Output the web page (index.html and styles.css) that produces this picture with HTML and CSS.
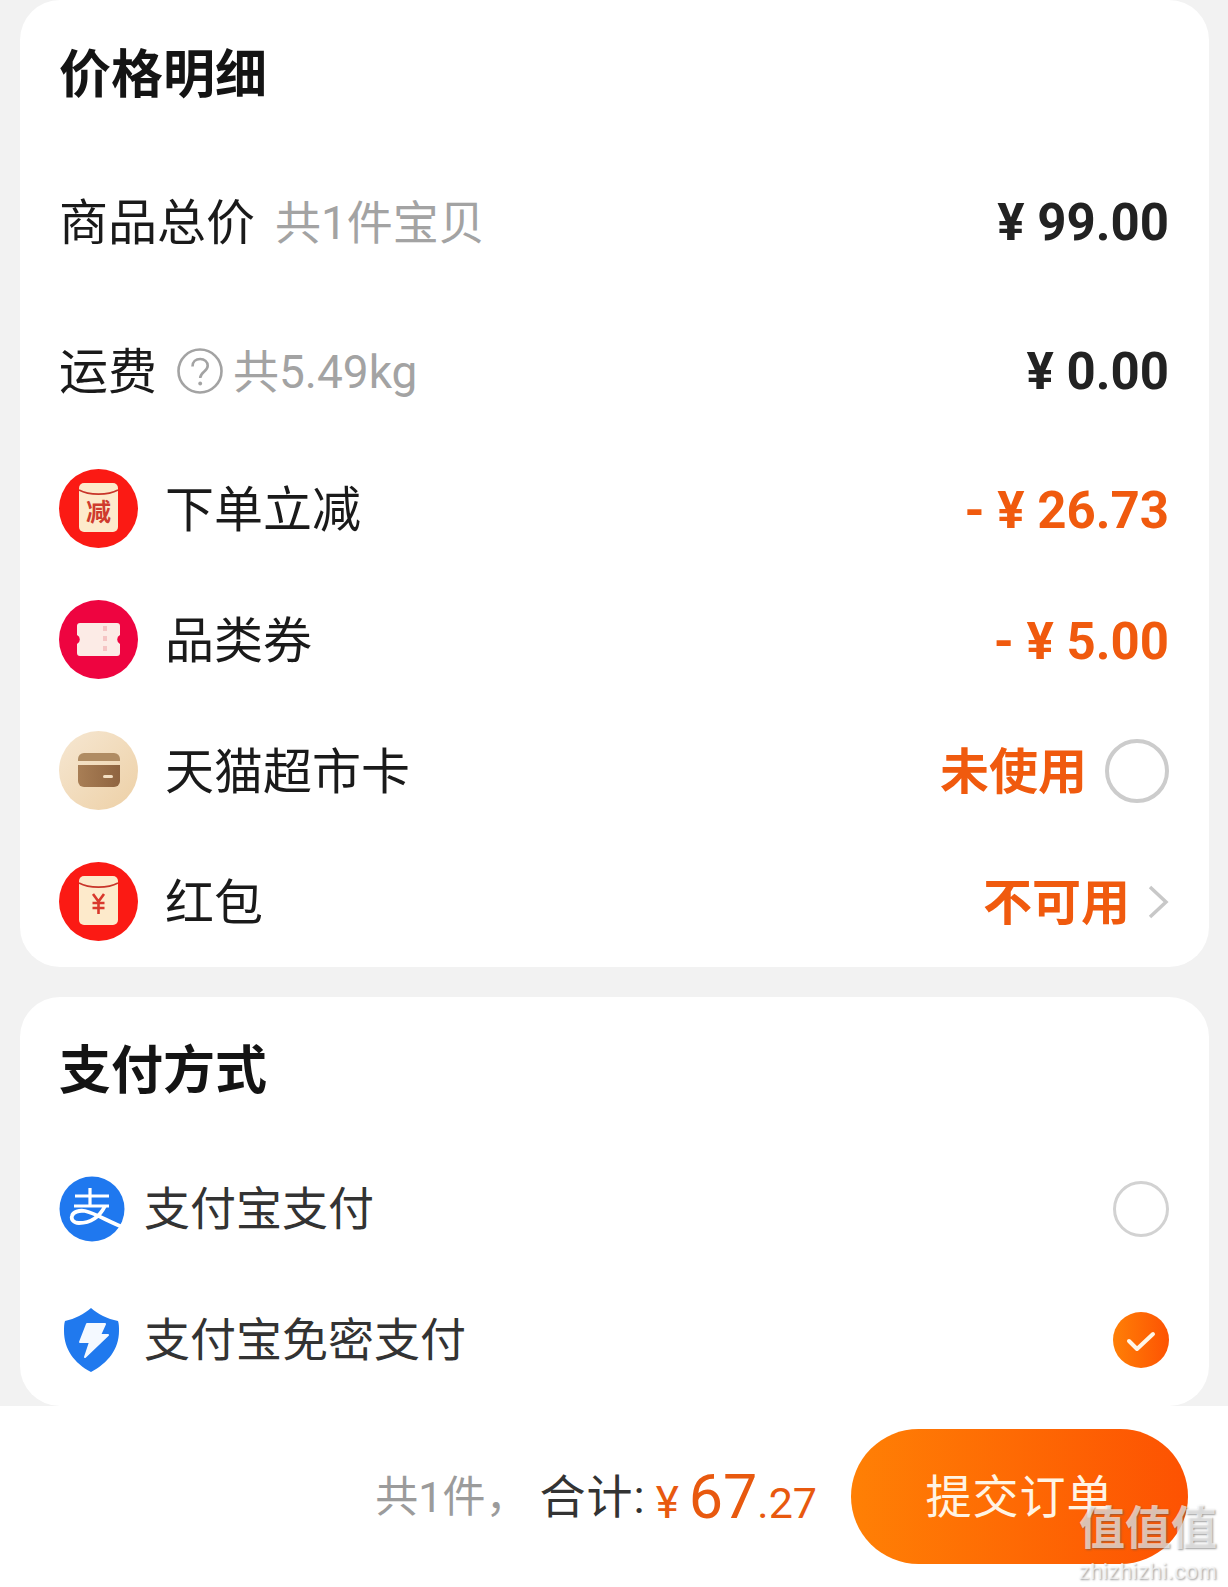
FILE: index.html
```html
<!DOCTYPE html>
<html lang="zh-CN">
<head>
    <meta charset="UTF-8">
    <meta name="viewport" content="width=device-width, initial-scale=1.0">
    <title>确认订单</title>
    <link rel="stylesheet" href="styles.css">
</head>
<body>
    <div class="card">
        <h2>价格明细</h2>
        <div class="row row-plain">
            <div class="label">商品总价<span class="note note-gap">共1件宝贝</span></div>
            <div class="price">¥ 99.00</div>
        </div>
        <div class="row row-plain row-ship">
            <div class="label">运费
                <svg class="help" viewBox="0 0 46 46">
                    <circle cx="23" cy="23" r="21.500" fill="none" stroke="#a3a3a3" stroke-width="2.600"/>
                    <path d="M15.500 18.500c0-4.600 3.300-7.500 7.700-7.500 4.300 0 7.500 2.800 7.500 6.700 0 5.800-7.500 6.300-7.500 12.300" fill="none" stroke="#a3a3a3" stroke-width="2.600"/>
                    <circle cx="23.200" cy="35.500" r="1.900" fill="#a3a3a3"/>
                </svg>
                <span class="note">共5.49kg</span>
            </div>
            <div class="price">¥ 0.00</div>
        </div>
        <div class="row">
            <div class="label">
                <svg class="icon" viewBox="0 0 79 79">
                    <circle cx="39.500" cy="39.500" r="39.500" fill="#fb1a14"/>
                    <rect x="20" y="14" width="39" height="49" rx="5" fill="#fdeacb"/>
                    <path d="M20 21c10 5.500 29 5.500 39 0" fill="none" stroke="#c8352a" stroke-width="1.600"/>
                    <text x="39.500" y="52" class="icon-text" font-size="25">减</text>
                </svg>
                下单立减
            </div>
            <div class="price orange">- ¥ 26.73</div>
        </div>
        <div class="row">
            <div class="label">
                <svg class="icon" viewBox="0 0 79 79">
                    <circle cx="39.500" cy="39.500" r="39.500" fill="#ee0440"/>
                    <path d="M21 23h37a3 3 0 0 1 3 3v9a5 5 0 0 0 0 9v9a3 3 0 0 1-3 3H21a3 3 0 0 1-3-3v-9a5 5 0 0 0 0-9v-9a3 3 0 0 1 3-3z" fill="#fcebe6"/>
                    <path d="M46 26v28" stroke="#f5c4c4" stroke-width="4" stroke-dasharray="5 5"/>
                </svg>
                品类券
            </div>
            <div class="price orange">- ¥ 5.00</div>
        </div>
        <div class="row">
            <div class="label">
                <svg class="icon" viewBox="0 0 79 79">
                    <defs>
                        <linearGradient id="tan" x1="0" y1="0" x2="1" y2="1">
                            <stop offset="0" stop-color="#f6e7d2"/>
                            <stop offset="1" stop-color="#edd0a6"/>
                        </linearGradient>
                        <linearGradient id="wallet" x1="0" y1="0" x2="1" y2="0">
                            <stop offset="0" stop-color="#a87e55"/>
                            <stop offset="1" stop-color="#8f6440"/>
                        </linearGradient>
                    </defs>
                    <circle cx="39.500" cy="39.500" r="39.500" fill="url(#tan)"/>
                    <path d="M19 30v-2a6 6 0 0 1 6-6h30a6 6 0 0 1 6 6v2z" fill="#b08c63"/>
                    <path d="M19 34h42v16a6 6 0 0 1-6 6H25a6 6 0 0 1-6-6z" fill="url(#wallet)"/>
                    <rect x="44" y="44" width="10" height="3" rx="1.500" fill="#f3dfc3"/>
                </svg>
                天猫超市卡
            </div>
            <div class="side">
                <span class="status">未使用</span>
                <span class="radio radio-lg"></span>
            </div>
        </div>
        <div class="row">
            <div class="label">
                <svg class="icon" viewBox="0 0 79 79">
                    <circle cx="39.500" cy="39.500" r="39.500" fill="#fb1a14"/>
                    <rect x="20" y="14" width="39" height="49" rx="5" fill="#fdeacb"/>
                    <path d="M20 21c10 5.500 29 5.500 39 0" fill="none" stroke="#c8352a" stroke-width="1.600"/>
                    <path d="M34 32l5.500 7.500L45 32M33.500 41h12M33.500 46h12M39.500 39v13" fill="none" stroke="#d9382c" stroke-width="2.600"/>
                </svg>
                红包
            </div>
            <div class="side side-arrow">
                <span class="status">不可用</span>
                <svg class="arrow" viewBox="0 0 22 36">
                    <path d="M3 3l16 15L3 33" fill="none" stroke="#c8c8c8" stroke-width="3.500"/>
                </svg>
            </div>
        </div>
    </div>

    <div class="card card-pay">
        <h2>支付方式</h2>
        <div class="row">
            <div class="label label-pay">
                <svg class="pay-icon" viewBox="0 0 66 66">
                    <circle cx="33" cy="33" r="32.500" fill="#1f78ef"/>
                    <path d="M16 20h34M31 12v18M15 30h35" fill="none" stroke="#fff" stroke-width="3.200"/>
                    <path d="M46 30C40 42 30 47 20 47 14 47 12 43 13 40 14 36 20 34 26 35 36 37 50 46 66 52" fill="none" stroke="#fff" stroke-width="3.800"/>
                </svg>
                支付宝支付
            </div>
            <span class="radio"></span>
        </div>
        <div class="row">
            <div class="label label-pay">
                <svg class="pay-icon" viewBox="0 0 66 66">
                    <path d="M32 1c7 6 16 11 27 13 1 3 1 6 1 10 0 18-11 32-28 41C15 56 5 42 5 24c0-4 0-7 1-10C16 12 25 7 32 1z" fill="#2079ee"/>
                    <path d="M28 17h18l-5 11h8L26 50l5-15H21z" fill="#f4f9ff" stroke="#f4f9ff" stroke-width="2" stroke-linejoin="round"/>
                </svg>
                支付宝免密支付
            </div>
            <svg class="check" viewBox="0 0 56 56">
                <defs>
                    <linearGradient id="chk" x1="0" y1="0" x2="1" y2="0">
                        <stop offset="0" stop-color="#ff7f06"/>
                        <stop offset="1" stop-color="#fd5303"/>
                    </linearGradient>
                </defs>
                <circle cx="28" cy="28" r="28" fill="url(#chk)"/>
                <path d="M16 29l8 8 16-15" fill="none" stroke="#fff6e8" stroke-width="4" stroke-linecap="round" stroke-linejoin="round"/>
            </svg>
        </div>
    </div>

    <div class="footer">
        <span class="count">共1件，</span>
        <span class="total">合计:</span>
        <span class="amount"><span class="yen">¥</span><span class="big">67</span>.27</span>
        <button class="submit">提交订单</button>
    </div>

    <div class="watermark">
        <div class="wm-mark">值值值</div>
        <div class="wm-site">zhizhizhi.com</div>
    </div>
</body>
</html>
```

FILE: styles.css
```css
* {
    box-sizing: border-box;
}
body {
    position: relative;
    margin: 0;
    height: 1587px;
    overflow: hidden;
    background-color: #f2f2f2;
    font-family: Roboto, "Noto Sans CJK SC", sans-serif;
    color: #1a1a1a;
}
.card {
    margin: 0 19px 0 20px;
    padding: 0 40px 0 39px;
    background-color: #fff;
    border-radius: 40px;
}
.card-pay {
    margin-top: 30px;
    padding-bottom: 1px;
}
h2 {
    margin: 0;
    height: 148px;
    padding-bottom: 7px;
    display: flex;
    align-items: center;
    font-family: "Noto Sans CJK SC", sans-serif;
    font-size: 52px;
    font-weight: 700;
    color: #141414;
}
.card-pay h2 {
    height: 146px;
}
.row {
    height: 131px;
    display: flex;
    align-items: center;
    justify-content: space-between;
}
.row-plain {
    height: 148px;
}
.row-ship {
    height: 147px;
    padding-top: 3px;
}
.label {
    display: flex;
    align-items: center;
    padding-bottom: 7px;
    font-size: 49px;
    color: #1a1a1a;
}
.label-pay {
    font-size: 46px;
    color: #333;
}
.note {
    font-size: 46px;
    color: #a3a3a3;
}
.note-gap {
    margin-left: 20px;
}
.help {
    width: 46px;
    height: 46px;
    margin: 7px 10px 0 20px;
}
.icon {
    width: 79px;
    height: 79px;
    margin: 7px 27px 0 0;
}
.icon-text {
    font-family: "Noto Sans CJK SC", sans-serif;
    font-weight: 700;
    fill: #cf3b2e;
    text-anchor: middle;
}
.pay-icon {
    width: 66px;
    height: 66px;
    margin: 7px 19px 0 0;
}
.price {
    font-size: 51px;
    font-weight: 700;
    color: #222;
    white-space: pre;
}
.orange {
    padding-top: 3px;
    color: #f05a0e;
}
.side {
    display: flex;
    align-items: center;
    gap: 18px;
}
.side-arrow {
    gap: 17px;
}
.status {
    padding-bottom: 7px;
    font-family: "Noto Sans CJK SC", sans-serif;
    font-size: 49px;
    font-weight: 700;
    color: #f05a0e;
}
.radio {
    width: 56px;
    height: 56px;
    border: 3px solid #d2d2d2;
    border-radius: 50%;
    background-color: #fff;
}
.radio-lg {
    width: 64px;
    height: 64px;
    border-width: 4px;
    border-color: #cccccc;
}
.arrow {
    width: 22px;
    height: 36px;
}
.check {
    width: 56px;
    height: 56px;
}
.footer {
    height: 181px;
    padding-right: 40px;
    display: flex;
    align-items: center;
    justify-content: flex-end;
    background-color: #fff;
}
.count {
    padding-bottom: 7px;
    margin-right: 11px;
    font-size: 43px;
    color: #9b9b9b;
}
.total {
    padding-bottom: 7px;
    font-size: 46px;
    letter-spacing: 1px;
    color: #333;
}
.amount {
    margin: 0 34px 0 10px;
    font-size: 43px;
    color: #e8590f;
}
.yen {
    margin-right: 10px;
    font-size: 44px;
}
.big {
    font-size: 61px;
}
.submit {
    width: 337px;
    height: 135px;
    padding: 0 0 7px 0;
    border: none;
    border-radius: 68px;
    background: linear-gradient(90deg, #ff8005, #fd5202);
    font-family: "Noto Sans CJK SC", sans-serif;
    font-size: 46px;
    color: #fff4e4;
    letter-spacing: 1px;
}
.watermark {
    position: absolute;
    right: 10px;
    bottom: 3px;
    width: 140px;
    text-align: center;
    color: rgba(255, 255, 255, 0.65);
    text-shadow: 1px 1px 2px rgba(90, 90, 90, 0.6);
}
.wm-mark {
    margin-bottom: 10px;
    font-family: "Noto Sans CJK SC", sans-serif;
    font-size: 46px;
    font-weight: 700;
    line-height: 52px;
}
.wm-site {
    font-family: "Liberation Sans", sans-serif;
    font-size: 22px;
    line-height: 24px;
    letter-spacing: 0.5px;
    white-space: nowrap;
}
```
